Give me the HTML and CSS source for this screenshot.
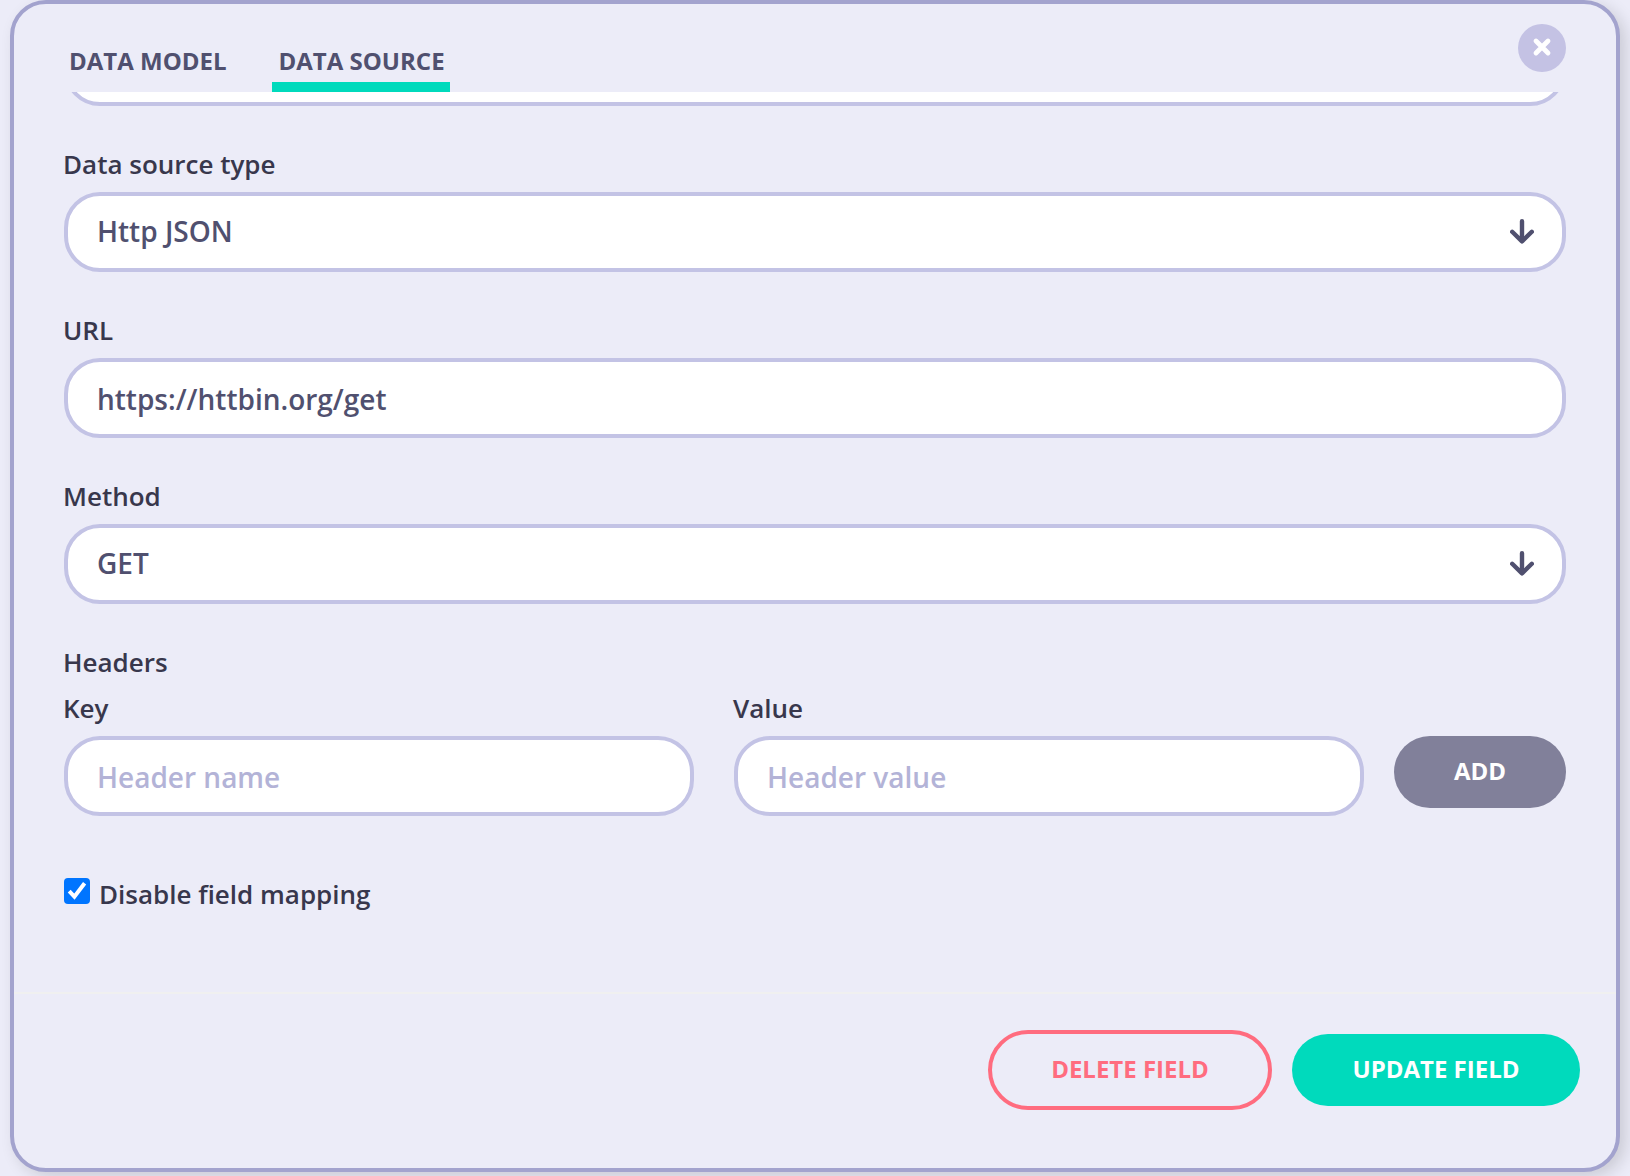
FILE: index.html
```html
<!DOCTYPE html>
<html lang="en">
<head>
<meta charset="utf-8">
<title>Data source</title>
<link rel="stylesheet" href="styles.css">
</head>
<body>
<main class="modal">
  <header class="modal-header">
    <nav class="tabs">
      <a class="tab">DATA MODEL</a>
      <a class="tab tab-active">DATA SOURCE</a>
    </nav>
    <button class="close" aria-label="Close">
      <svg width="48" height="48" viewBox="0 0 48 48"><path d="M18 17l12 12M30 17l-12 12" stroke="#fff" stroke-width="4.8" stroke-linecap="round"/></svg>
    </button>
  </header>
  <section class="modal-body">
    <div class="control control-scrolled"></div>
    <div class="field">
      <label class="label">Data source type</label>
      <div class="control select"><span>Http JSON</span>
        <svg class="arrow" width="24" height="26" viewBox="0 0 24 26"><path d="M12 3.200v20M2.200 13.800L12 23.400l9.800-9.600" fill="none" stroke="#50506f" stroke-width="4.400" stroke-linecap="round" stroke-linejoin="round"/></svg>
      </div>
    </div>
    <div class="field">
      <label class="label" for="url">URL</label>
      <input class="control" id="url" value="https://httbin.org/get">
    </div>
    <div class="field">
      <label class="label">Method</label>
      <div class="control select"><span>GET</span>
        <svg class="arrow" width="24" height="26" viewBox="0 0 24 26"><path d="M12 3.200v20M2.200 13.800L12 23.400l9.800-9.600" fill="none" stroke="#50506f" stroke-width="4.400" stroke-linecap="round" stroke-linejoin="round"/></svg>
      </div>
    </div>
    <div class="field">
      <span class="label">Headers</span>
      <div class="header-row">
        <div class="header-cell">
          <label class="label" for="key">Key</label>
          <input class="control" id="key" placeholder="Header name">
        </div>
        <div class="header-cell">
          <label class="label" for="value">Value</label>
          <input class="control" id="value" placeholder="Header value">
        </div>
        <button class="button button-add">ADD</button>
      </div>
    </div>
    <div class="check-row">
      <svg class="checkbox" width="26" height="26" viewBox="0 0 26 26"><rect width="26" height="26" rx="4" fill="#0075ff"/><path d="M5.200 13.200l5.200 5.400L20.600 5.200" fill="none" stroke="#fff" stroke-width="4"/></svg>
      <span class="label">Disable field mapping</span>
    </div>
  </section>
  <footer class="modal-footer">
    <button class="button button-delete">DELETE FIELD</button>
    <button class="button button-update">UPDATE FIELD</button>
  </footer>
</main>
</body>
</html>
```
FILE: styles.css
```css
* { box-sizing: border-box; }

body {
  margin: 0;
  height: 1176px;
  overflow: hidden;
  background: #ececf8;
  font-family: "Open Sans", sans-serif;
}

.modal {
  display: flex;
  flex-direction: column;
  height: 1172px;
  margin: 0 10px;
  border: 4px solid #a3a3ce;
  border-radius: 36px;
  background: #ececf8;
  box-shadow: 6px 5px 16px rgba(0, 0, 0, 0.14);
}

.modal-header {
  display: flex;
  flex: none;
  justify-content: space-between;
  align-items: flex-start;
  height: 88px;
  padding: 20px 50px 0 48px;
}

.tabs {
  display: flex;
  gap: 40px;
  height: 68px;
}

.tab {
  padding: 20px 5px 0 7px;
  border-bottom: 10px solid transparent;
  color: #50506f;
  font-size: 24px;
  font-weight: 700;
  line-height: 34px;
}

.tab-active { border-bottom-color: #00dabc; }

.close {
  width: 48px;
  height: 48px;
  padding: 0;
  border: 0;
  border-radius: 50%;
  background: #c4c2e4;
}

.close svg { display: block; }

.modal-body {
  display: flex;
  flex: 1;
  flex-direction: column;
  gap: 40px;
  min-height: 0;
  padding: 0 50px;
  overflow: hidden;
}

.field,
.header-cell {
  display: flex;
  flex-direction: column;
  gap: 10px;
}

.label {
  margin-left: -1px;
  color: #38374c;
  font-size: 26px;
  font-weight: 600;
  line-height: 36px;
}

.control {
  flex: none;
  width: 100%;
  height: 80px;
  padding: 2px 28px 0 29px;
  border: 4px solid #c3c3e5;
  border-radius: 36px;
  background: #fff;
  color: #50506f;
  font: 600 28px/38px "Open Sans", sans-serif;
}

.control::placeholder {
  color: #b3b3d7;
  opacity: 1;
}

.control-scrolled { margin-top: -66px; }

.select {
  display: flex;
  justify-content: space-between;
  align-items: center;
  padding: 0 28px 2px 29px;
}

.header-row {
  display: grid;
  grid-template-columns: 630px 630px 172px;
  column-gap: 40px;
}

.check-row {
  display: flex;
  gap: 10px;
  margin-top: 20px;
}

.checkbox {
  flex: none;
  margin-top: 2px;
}

.button {
  height: 72px;
  padding: 0 0 2px;
  border: 0;
  border-radius: 36px;
  color: #fff;
  font: 700 24px/34px "Open Sans", sans-serif;
}

.button-add {
  width: 172px;
  margin: 46px 0 0 -10px;
  background: #81809a;
}

.modal-footer {
  display: flex;
  flex: none;
  justify-content: flex-end;
  align-items: center;
  gap: 20px;
  height: 176px;
  padding: 0 36px 22px;
  border-top: 2px solid #f0f0f0;
}

.button-delete {
  width: 284px;
  height: 80px;
  border: 4px solid #ff6c7f;
  border-radius: 40px;
  background: transparent;
  color: #ff6c7f;
}

.button-update {
  width: 288px;
  background: #00dabc;
}
```
